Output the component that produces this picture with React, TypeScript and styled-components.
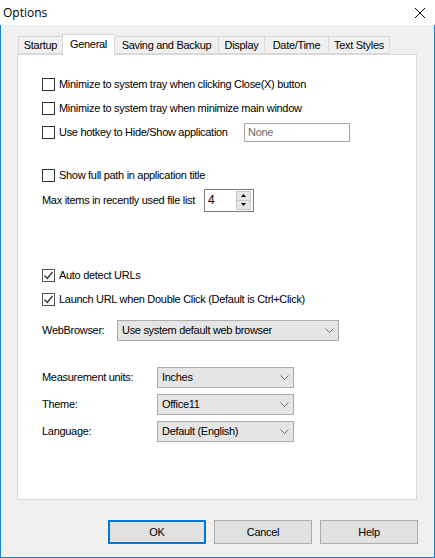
import React from 'react';
import styled, { createGlobalStyle } from 'styled-components';

const GlobalStyle = createGlobalStyle`
  html, body {
    margin: 0;
    padding: 0;
    background: #f0f0f0;
  }
  body {
    font-family: "Liberation Sans", Arial, sans-serif;
    font-size: 11px;
    letter-spacing: -0.3px;
    color: #000;
  }
`;

const Window = styled.div`
  width: 435px;
  height: 558px;
  box-sizing: border-box;
  border: 1px solid #1883d7;
  border-top: none;
  background: #f0f0f0;
  display: flex;
  flex-direction: column;
`;

const TitleBar = styled.div`
  height: 25px;
  flex: none;
  background: #fff;
  display: flex;
  align-items: center;
  justify-content: space-between;
  padding: 0 9px 0 3px;
  margin: 0 -1px;
  font-family: "Open Sans", "Liberation Sans", sans-serif;
  font-size: 12px;
  letter-spacing: 0;
`;

const CloseBox = styled.div`
  width: 12px;
  height: 12px;
  display: flex;
  margin-top: 1px;
`;

const Body = styled.div`
  flex: 1;
  padding: 8px 16px 0 15px;
  display: flex;
  flex-direction: column;
`;

const TabRow = styled.div`
  display: flex;
  align-items: flex-end;
  padding-left: 2px;
  height: 21px;
`;

const Tab = styled.div<{ $active?: boolean; $w: number }>`
  box-sizing: border-box;
  width: ${p => p.$w}px;
  height: ${p => (p.$active ? 21 : 18)}px;
  margin-left: -1px;
  margin-bottom: ${p => (p.$active ? -1 : 0)}px;
  border: 1px solid #d9d9d9;
  border-bottom: ${p => (p.$active ? 'none' : '1px solid #d9d9d9')};
  background: ${p => (p.$active ? '#fff' : '#f0f0f0')};
  position: relative;
  z-index: ${p => (p.$active ? 2 : 1)};
  display: flex;
  align-items: center;
  justify-content: center;
  padding-bottom: ${p => (p.$active ? 2 : 0)}px;
  white-space: nowrap;
  &:first-child {
    margin-left: 0;
  }
`;

const Panel = styled.div`
  box-sizing: border-box;
  width: 400px;
  height: 446px;
  background: #fff;
  border: 1px solid #d9d9d9;
  margin-left: 1px;
  padding: 17px 0 0 24px;
  display: flex;
  flex-direction: column;
`;

const Row = styled.div<{ $top?: number }>`
  height: 24px;
  margin-top: ${p => p.$top ?? 0}px;
  display: flex;
  align-items: center;
  white-space: nowrap;
`;

const CheckWrap = styled.label<{ $w?: number }>`
  display: flex;
  align-items: center;
  gap: 4px;
  width: ${p => (p.$w ? `${p.$w}px` : 'auto')};
`;

const Box = styled.span<{ $checked?: boolean }>`
  box-sizing: border-box;
  width: 13px;
  height: 13px;
  border: 1px solid ${p => (p.$checked ? '#555' : '#333')};
  background: #fff;
  display: flex;
  align-items: center;
  justify-content: center;
  flex: none;
`;

const FieldLabel = styled.span<{ $w: number }>`
  width: ${p => p.$w}px;
  flex: none;
`;

const TextInput = styled.div`
  box-sizing: border-box;
  width: 106px;
  height: 19px;
  border: 1px solid #a8a8a8;
  background: #fff;
  color: #6d6d6d;
  padding-left: 3px;
  display: flex;
  align-items: center;
`;

const Spin = styled.div`
  box-sizing: border-box;
  width: 50px;
  height: 23px;
  border: 1px solid #7a7a7a;
  background: #fff;
  display: flex;
  align-items: center;
  justify-content: space-between;
  padding: 0 2px 0 3px;
  font-size: 12px;
`;

const SpinButtons = styled.div`
  width: 13px;
  height: 17px;
  background: #e6e6e6;
  border: 1px solid #c8c8c8;
  display: flex;
  flex-direction: column;
`;

const SpinHalf = styled.div`
  flex: 1;
  display: flex;
  align-items: center;
  justify-content: center;
  & + & {
    border-top: 1px solid #c8c8c8;
  }
`;

const Select = styled.div<{ $w: number }>`
  box-sizing: border-box;
  width: ${p => p.$w}px;
  height: 21px;
  border: 1px solid #acacac;
  background: #e5e5e5;
  display: flex;
  align-items: center;
  justify-content: space-between;
  padding: 0 4px 0 4px;
`;

const ButtonBar = styled.div`
  display: flex;
  justify-content: flex-end;
  gap: 8px;
  margin-top: 20px;
  padding-right: 0;
`;

const DialogButton = styled.button<{ $default?: boolean }>`
  box-sizing: border-box;
  width: 98px;
  height: 24px;
  font-family: "Liberation Sans", Arial, sans-serif;
  font-size: 11px;
  letter-spacing: -0.3px;
  color: #000;
  background: #e1e1e1;
  border: ${p => (p.$default ? '2px solid #0078d7' : '1px solid #adadad')};
  padding: 0;
`;

const Chevron = () => (
  <svg width="9" height="5" viewBox="0 0 9 5">
    <polyline points="0.5,0.5 4.5,4.5 8.5,0.5" fill="none" stroke="#707070" strokeWidth="1" />
  </svg>
);

const Check = () => (
  <svg width="11" height="11" viewBox="0 0 11 11">
    <polyline points="1.5,5.5 4.2,8.5 9.5,2" fill="none" stroke="#333" strokeWidth="1.3" />
  </svg>
);

const CheckItem = ({ label, checked, w }: { label: string; checked?: boolean; w?: number }) => (
  <CheckWrap $w={w}>
    <Box $checked={checked}>{checked && <Check />}</Box>
    <span>{label}</span>
  </CheckWrap>
);

const tabs = [
  { label: 'Startup', w: 45 },
  { label: 'General', w: 53, active: true },
  { label: 'Saving and Backup', w: 105 },
  { label: 'Display', w: 47 },
  { label: 'Date/Time', w: 65 },
  { label: 'Text Styles', w: 62 },
];

export default function App() {
  return (
    <>
      <GlobalStyle />
      <Window>
        <TitleBar>
          <span>Options</span>
          <CloseBox>
            <svg width="12" height="12" viewBox="0 0 12 12">
              <path d="M1 1 L11 11 M11 1 L1 11" stroke="#000" strokeWidth="1" />
            </svg>
          </CloseBox>
        </TitleBar>
        <Body>
          <TabRow>
            {tabs.map(t => (
              <Tab key={t.label} $w={t.w} $active={t.active}>
                {t.label}
              </Tab>
            ))}
          </TabRow>
          <Panel>
            <Row>
              <CheckItem label="Minimize to system tray when clicking Close(X) button" />
            </Row>
            <Row>
              <CheckItem label="Minimize to system tray when minimize main window" />
            </Row>
            <Row>
              <CheckItem label="Use hotkey to Hide/Show application" w={202} />
              <TextInput>None</TextInput>
            </Row>
            <Row $top={19}>
              <CheckItem label="Show full path in application title" />
            </Row>
            <Row $top={1}>
              <FieldLabel $w={162}>Max items in recently used file list</FieldLabel>
              <Spin>
                <span>4</span>
                <SpinButtons>
                  <SpinHalf>
                    <svg width="5" height="3" viewBox="0 0 5 3"><polygon points="2.5,0 5,3 0,3" fill="#000" /></svg>
                  </SpinHalf>
                  <SpinHalf>
                    <svg width="5" height="3" viewBox="0 0 5 3"><polygon points="0,0 5,0 2.5,3" fill="#000" /></svg>
                  </SpinHalf>
                </SpinButtons>
              </Spin>
            </Row>
            <Row $top={51}>
              <CheckItem label="Auto detect URLs" checked />
            </Row>
            <Row>
              <CheckItem label="Launch URL when Double Click (Default is Ctrl+Click)" checked />
            </Row>
            <Row $top={7}>
              <FieldLabel $w={75}>WebBrowser:</FieldLabel>
              <Select $w={222}>
                <span>Use system default web browser</span>
                <Chevron />
              </Select>
            </Row>
            <Row $top={23}>
              <FieldLabel $w={115}>Measurement units:</FieldLabel>
              <Select $w={137}>
                <span>Inches</span>
                <Chevron />
              </Select>
            </Row>
            <Row $top={3}>
              <FieldLabel $w={115}>Theme:</FieldLabel>
              <Select $w={137}>
                <span>Office11</span>
                <Chevron />
              </Select>
            </Row>
            <Row $top={3}>
              <FieldLabel $w={115}>Language:</FieldLabel>
              <Select $w={137}>
                <span>Default (English)</span>
                <Chevron />
              </Select>
            </Row>
          </Panel>
          <ButtonBar>
            <DialogButton $default>OK</DialogButton>
            <DialogButton>Cancel</DialogButton>
            <DialogButton>Help</DialogButton>
          </ButtonBar>
        </Body>
      </Window>
    </>
  );
}
